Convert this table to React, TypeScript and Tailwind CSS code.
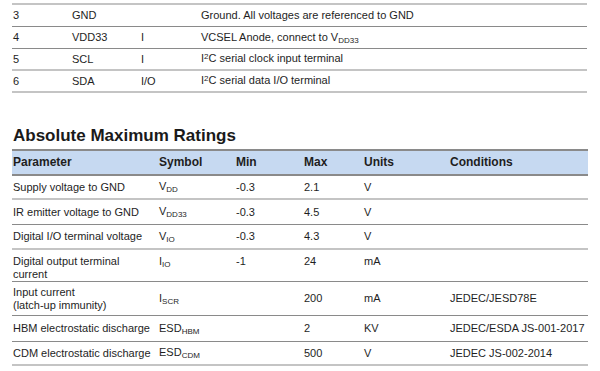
import React from 'react';

type PinRow = { pin: string; name: string; type: string; desc: React.ReactNode; line: string };

const Sub = ({ children }: { children: React.ReactNode }) => (
  <span className="text-[8px] relative top-[2px]">{children}</span>
);

const Sup = ({ children }: { children: React.ReactNode }) => (
  <span className="text-[8px] relative top-[-3px]">{children}</span>
);

const thick = 'border-b-2 border-[#c4c4c4]';
const thin = 'border-b border-[#8a8a8a]';

const pins: PinRow[] = [
  { pin: '3', name: 'GND', type: '', desc: 'Ground. All voltages are referenced to GND', line: thin },
  { pin: '4', name: 'VDD33', type: 'I', desc: <>VCSEL Anode, connect to V<Sub>DD33</Sub></>, line: thin },
  { pin: '5', name: 'SCL', type: 'I', desc: <>I<Sup>2</Sup>C serial clock input terminal</>, line: thick },
  { pin: '6', name: 'SDA', type: 'I/O', desc: <>I<Sup>2</Sup>C serial data I/O terminal</>, line: thick },
];

type Rating = {
  param: React.ReactNode;
  symbol: React.ReactNode;
  min: string;
  max: string;
  units: string;
  cond: string;
  h: string;
  line: string;
  top?: boolean;
};

const ratings: Rating[] = [
  { param: 'Supply voltage to GND', symbol: <>V<Sub>DD</Sub></>, min: '-0.3', max: '2.1', units: 'V', cond: '', h: 'h-[24px]', line: thick },
  { param: 'IR emitter voltage to GND', symbol: <>V<Sub>DD33</Sub></>, min: '-0.3', max: '4.5', units: 'V', cond: '', h: 'h-[25px]', line: thin },
  { param: 'Digital I/O terminal voltage', symbol: <>V<Sub>IO</Sub></>, min: '-0.3', max: '4.3', units: 'V', cond: '', h: 'h-[25px]', line: thick },
  { param: <>Digital output terminal<br />current</>, symbol: <>I<Sub>IO</Sub></>, min: '-1', max: '24', units: 'mA', cond: '', h: 'h-[32px]', line: thin, top: true },
  { param: <>Input current<br />(latch-up immunity)</>, symbol: <>I<Sub>SCR</Sub></>, min: '', max: '200', units: 'mA', cond: 'JEDEC/JESD78E', h: 'h-[34px]', line: thin },
  { param: 'HBM electrostatic discharge', symbol: <>ESD<Sub>HBM</Sub></>, min: '', max: '2', units: 'KV', cond: 'JEDEC/ESDA JS-001-2017', h: 'h-[26px]', line: thin },
  { param: 'CDM electrostatic discharge', symbol: <>ESD<Sub>CDM</Sub></>, min: '', max: '500', units: 'V', cond: 'JEDEC JS-002-2014', h: 'h-[24px]', line: thick },
];

const ratingCols = 'grid grid-cols-[147px_77px_68px_60px_86px_138px]';

const App: React.FC = () => {
  return (
    <div className="w-[600px] h-[371px] bg-white overflow-hidden text-[#1e1e1e] font-['Liberation_Sans',Arial,sans-serif] text-[11px] leading-[13px] pl-[12px] pt-[3px]">
      {/* Pin table */}
      <div className="w-[575px] border-t-2 border-[#c4c4c4]">
        {pins.map((p) => (
          <div key={p.pin} className={`grid grid-cols-[60px_69px_60px_386px] items-center h-[22px] ${p.line}`}>
            <div className="pl-[1px]">{p.pin}</div>
            <div>{p.name}</div>
            <div>{p.type}</div>
            <div>{p.desc}</div>
          </div>
        ))}
      </div>

      <h2 className="mt-[33px] mb-[3px] pl-[1px] text-[17px] leading-[20px] font-bold text-[#1a1a1a]">
        Absolute Maximum Ratings
      </h2>

      {/* Ratings table */}
      <div className="w-[576px]">
        <div className={`${ratingCols} items-center h-[27px] bg-[#c6d9f1] border-t-2 border-b-2 border-[#8a8a8a] font-bold text-[12px]`}>
          <div className="pl-[1px]">Parameter</div>
          <div>Symbol</div>
          <div>Min</div>
          <div>Max</div>
          <div>Units</div>
          <div>Conditions</div>
        </div>
        {ratings.map((r, i) => (
          <div
            key={i}
            className={`${ratingCols} ${r.top ? 'items-start pt-[5px]' : 'items-center'} ${r.h} ${r.line}`}
          >
            <div className="pl-[1px]">{r.param}</div>
            <div>{r.symbol}</div>
            <div>{r.min}</div>
            <div>{r.max}</div>
            <div>{r.units}</div>
            <div>{r.cond}</div>
          </div>
        ))}
      </div>
    </div>
  );
};

export default App;
